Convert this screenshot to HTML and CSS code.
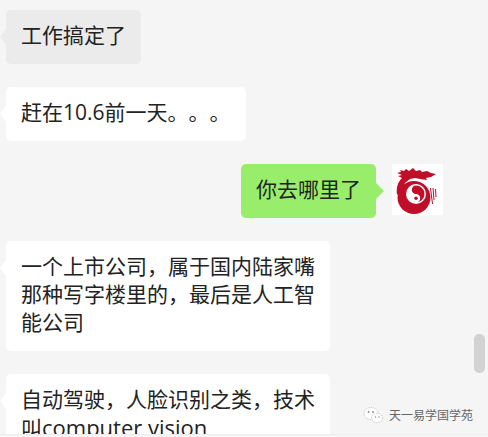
FILE: index.html
```html
<!DOCTYPE html>
<html lang="zh-CN">
<head>
    <meta charset="UTF-8">
    <meta name="viewport" content="width=device-width, initial-scale=1.0">
    <title>聊天记录</title>
    <link rel="stylesheet" href="styles.css">
</head>
<body>
    <div class="chat">
        <div class="row">
            <div class="bubble grey">工作搞定了</div>
        </div>
        <div class="row">
            <div class="bubble">赶在10.6前一天。。。</div>
        </div>
        <div class="row mine">
            <div class="bubble green">你去哪里了</div>
            <svg class="avatar" viewBox="0 0 51 51">
                <rect width="51" height="51" fill="#fff"/>
                <circle cx="22" cy="33.500" r="16.500" fill="#c00d28"/>
                <path d="M8 6l4 1 2-2 3 2 4-3 3 3 4-1 2 2 5-1 4 2 5 1-5 3-5 1 1 2-7-1-5-1-5 1-5 4-5 9-3 3c-1-8 1-13 5-17l-4-2 4-1-5-2 4-1z" fill="#c00d28"/>
                <path d="M38.500 24l2 16M41 24l1 12M43.500 25l.5 8" stroke="#c00d28" stroke-width="1" fill="none"/>
                <circle cx="24" cy="30" r="10" fill="#fff"/>
                <path d="M24 21.500a8.500 8.500 0 0 1 0 17a4.250 4.250 0 0 0 0-8.500a4.250 4.250 0 0 1 0-8.500z" fill="#c00d28"/>
                <circle cx="24" cy="25.700" r="1.700" fill="#c00d28"/>
                <circle cx="24" cy="34.300" r="1.700" fill="#c00d28"/>
            </svg>
        </div>
        <div class="row">
            <div class="bubble wide">一个上市公司&#65292;属于国内陆家嘴那种写字楼里的&#65292;最后是人工智能公司</div>
        </div>
        <div class="row">
            <div class="bubble wide">自动驾驶&#65292;人脸识别之类&#65292;技术叫<span class="latin">computer vision</span></div>
        </div>
    </div>
    <div class="scrollbar"></div>
    <div class="watermark">
        <svg class="wx" viewBox="0 0 20 18">
            <ellipse cx="8" cy="7.500" rx="7" ry="6" fill="#fff" stroke="#bbb" stroke-width="0.800" stroke-dasharray="1.500 1"/>
            <ellipse cx="14" cy="12" rx="5.500" ry="4.700" fill="#fff" stroke="#bbb" stroke-width="0.800" stroke-dasharray="1.500 1"/>
            <circle cx="5.500" cy="6" r="0.900" fill="#888"/>
            <circle cx="10" cy="6" r="0.900" fill="#888"/>
            <circle cx="12.500" cy="11" r="0.700" fill="#888"/>
            <circle cx="16" cy="11" r="0.700" fill="#888"/>
        </svg>
        <span>天一易学国学苑</span>
    </div>
</body>
</html>
```

FILE: styles.css
```css
html, body {
    height: 100%;
}
body {
    margin: 0;
    position: relative;
    overflow: hidden;
    background-color: #f5f5f5;
    font-family: "Open Sans", "Noto Sans CJK SC", sans-serif;
    color: #222;
}
.chat {
    display: flex;
    flex-direction: column;
    gap: 23px;
    height: 424px;
    padding: 10px 45px 0 6px;
    overflow: hidden;
    border-bottom: 1px solid #eee;
}
.row {
    display: flex;
    align-items: flex-start;
}
.mine {
    justify-content: flex-end;
    gap: 16px;
}
.bubble {
    position: relative;
    padding: 11px 15px 15px;
    font-size: 21px;
    line-height: 28px;
    background-color: #fff;
    border-radius: 5px;
    text-spacing-trim: space-all;
}
.bubble::before {
    content: "";
    position: absolute;
    top: 19px;
    left: -6px;
    width: 12px;
    height: 16px;
    background-color: inherit;
    clip-path: polygon(50% 0, 100% 50%, 50% 100%, 0 50%);
}
.grey {
    background-color: #ebebeb;
}
.green {
    background-color: #98ee6a;
}
.green::before {
    left: auto;
    right: -8px;
    width: 16px;
}
.wide {
    width: 294px;
}
.latin {
    font-size: 22px;
}
.avatar {
    width: 51px;
    height: 51px;
    flex-shrink: 0;
}
.scrollbar {
    position: absolute;
    top: 334px;
    left: 474px;
    width: 11px;
    height: 39px;
    border-radius: 5px;
    background-color: #d2d2d2;
}
.watermark {
    position: absolute;
    top: 406px;
    left: 363px;
    display: flex;
    align-items: center;
    gap: 6px;
    font-size: 12px;
    color: #666;
}
.wx {
    width: 20px;
    height: 18px;
}
```
